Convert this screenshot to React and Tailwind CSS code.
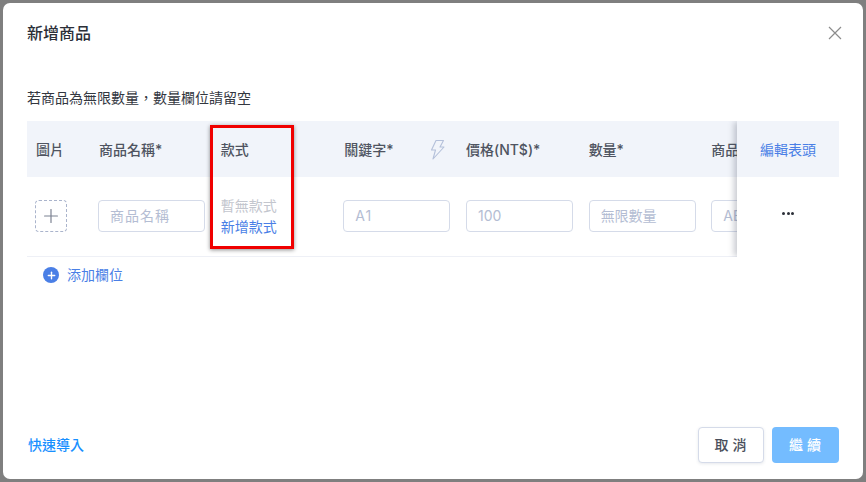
import React from "react";
import { Plus } from "lucide-react";

const font = "font-['Inter','Noto_Sans_CJK_TC',sans-serif]";

const headers = ["圖片", "商品名稱*", "款式", "關鍵字*", "價格(NT$)*", "數量*", "商品"];

function Field({ placeholder, wide }) {
  return (
    <div className={`h-8 w-[107px] shrink-0 rounded-[4px] border border-[#d5dbe9] bg-white pl-[11px] text-[14px] leading-[30px] text-[#b4bdd3] ${wide ? "tracking-[1px]" : ""}`}>
      {placeholder}
    </div>
  );
}

export default function App() {
  return (
    <div className={`${font} h-[482px] w-[866px] overflow-hidden bg-[#7f7f7f] p-[3px]`}>
      <div className="relative flex h-[476px] w-[860px] flex-col rounded-[7px] bg-white pl-6 pr-6">
        <div className="flex items-start justify-between pt-[19px]">
          <h1 className="text-[16px] leading-[22px] font-medium text-[#2b2f38]">新增商品</h1>
          <svg className="mt-[4px] -mr-[3px]" width="14" height="14" viewBox="0 0 14 14" fill="none" stroke="#8c8c8c" strokeWidth="1.2">
            <path d="M1 1 13 13M13 1 1 13" />
          </svg>
        </div>

        <p className="mt-[44px] text-[14px] leading-5 text-[#33373f]">若商品為無限數量，數量欄位請留空</p>

        <div className="relative mt-[13px] w-[812px] overflow-hidden">
          <div className="grid grid-cols-[71px_repeat(6,122.67px)] w-[1000px]">
            {headers.map((h, i) => (
              <div key={h} className={`flex h-[56px] items-center bg-[#f1f4fa] text-[14px] font-medium text-[#4f5461] ${i === 0 ? "pl-[9px]" : i === 1 || i === 3 ? "pl-px" : ""}`}>
                {h}
                {i === 3 && (
                  <svg className="ml-[36px]" width="15" height="21" viewBox="0 0 15 21" fill="none" stroke="#b4c0da" strokeWidth="1.1" strokeLinejoin="round">
                    <path d="M6 1.5h7.5L10 8h4L3 20l2.5-9H1.5z" />
                  </svg>
                )}
              </div>
            ))}
            <div className="flex h-[79px] items-start pl-2 pt-[23px]">
              <div className="flex h-8 w-8 items-center justify-center rounded-[4px] border border-dashed border-[#aab4cc]">
                <Plus className="text-[#7b8191]" size={22} strokeWidth={1.3} />
              </div>
            </div>
            <div className="h-[79px] pt-[23px]"><Field placeholder="商品名稱" wide /></div>
            <div className="h-[79px] pt-[18px] text-[14px] leading-[21px]">
              <div className="text-[#c3c6ce]">暫無款式</div>
              <div className="text-[#4a7fe6]">新增款式</div>
            </div>
            <div className="h-[79px] pt-[23px]"><Field placeholder="A1" wide /></div>
            <div className="h-[79px] pt-[23px]"><Field placeholder="100" /></div>
            <div className="h-[79px] pt-[23px]"><Field placeholder="無限數量" /></div>
            <div className="h-[79px] pt-[23px]"><Field placeholder="ABC" /></div>
          </div>
          <div className="border-t border-[#eef0f6]" />

          {/* sticky action column */}
          <div className="absolute right-0 top-0 bottom-0 w-[102px] bg-white shadow-[-4px_0_6px_-1px_rgba(60,70,90,0.28)]">
            <div className="flex h-[56px] items-center justify-center bg-[#f1f4fa] text-[14px] text-[#4a7fe6]">編輯表頭</div>
            <div className="flex h-[72px] items-center justify-center">
              <div className="flex gap-[1.5px]">
                <span className="h-[3px] w-[3px] rounded-full bg-[#2b2f38]" />
                <span className="h-[3px] w-[3px] rounded-full bg-[#2b2f38]" />
                <span className="h-[3px] w-[3px] rounded-full bg-[#2b2f38]" />
              </div>
            </div>
          </div>
        </div>

        <div className="mt-[8px] flex items-center pl-4 text-[14px] leading-5 text-[#4a7fe6]">
          <span className="flex h-4 w-4 items-center justify-center rounded-full bg-[#4a7fe6]">
            <Plus className="text-white" size={11} strokeWidth={3} />
          </span>
          <span className="ml-2">添加欄位</span>
        </div>

        <div className="mt-auto flex items-center justify-between pb-[16px] pl-[1px]">
          <span className="-mt-[1px] text-[14px] font-medium text-[#1890ff]">快速導入</span>
          <div className="flex gap-2">
            <div className="flex h-9 w-[66px] items-center justify-center rounded-[4px] border border-[#d5dbe9] bg-white pb-px pl-[3px] text-[14px] font-medium tracking-[4px] text-[#4a4f5c] shadow-[0_1px_3px_rgba(60,70,110,0.12)]">取消</div>
            <div className="flex h-9 w-[67px] items-center justify-center rounded-[4px] bg-[#74bcff] pb-px pl-[3px] text-[14px] font-medium tracking-[4px] text-white">繼續</div>
          </div>
        </div>

        {/* red highlight annotation */}
        <div className="absolute left-[207px] top-[122px] h-[124px] w-[84px] border-[3px] border-[#f00000] shadow-[0_1px_4px_rgba(0,0,0,0.45)]" />
      </div>
    </div>
  );
}
